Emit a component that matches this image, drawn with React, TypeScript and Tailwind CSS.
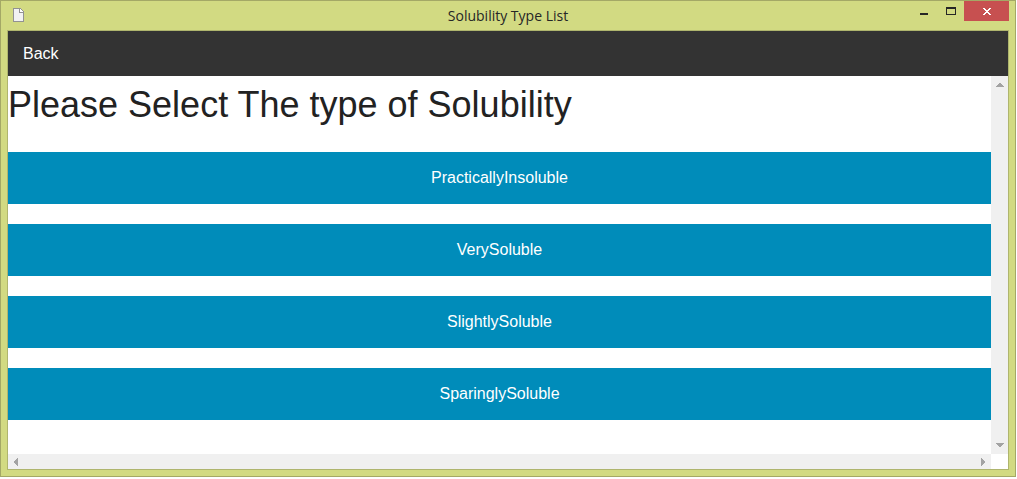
const solubilityTypes = [
  'PracticallyInsoluble',
  'VerySoluble',
  'SlightlySoluble',
  'SparinglySoluble',
];

function TitleBar() {
  return (
    <header className="grid h-[29px] grid-cols-[1fr_auto_1fr] items-start">
      <svg className="mt-[7px] ml-3" width="11" height="14" viewBox="0 0 11 14" shapeRendering="crispEdges" aria-hidden="true">
        <path d="M0 0H8V1H9V2H10V3H11V14H0Z" fill="#929292" />
        <path d="M1 1H6V5H10V13H1Z" fill="#f2f2f2" />
        <path d="M7 1H8V2H9V3H10V4H7Z" fill="#fff" />
      </svg>
      <h2 className="pt-[5px] font-['Open_Sans','Noto_Sans',sans-serif] text-sm leading-5 text-[#262626]">Solubility Type List</h2>
      <div className="mr-1.5 flex justify-end">
        <button type="button" aria-label="Minimize" className="flex h-5 w-[27px] items-center justify-center">
          <svg width="27" height="20" viewBox="0 0 27 20" shapeRendering="crispEdges">
            <path d="M10 12H18V14H10Z" fill="#262626" />
          </svg>
        </button>
        <button type="button" aria-label="Maximize" className="flex h-5 w-[27px] items-center justify-center">
          <svg width="27" height="20" viewBox="0 0 27 20" shapeRendering="crispEdges">
            <path d="M9 6H19V14H9ZM10 8V13H18V8Z" fill="#262626" fillRule="evenodd" />
          </svg>
        </button>
        <button type="button" aria-label="Close" className="flex h-5 w-[45px] items-center justify-center bg-[#c75050]">
          <svg width="45" height="20" viewBox="0 0 45 20" shapeRendering="crispEdges">
            <path d="M19 7h2v1h1v1h2v-1h1v-1h2v1h-1v1h-1v1h-1v1h1v1h1v1h1v1h-2v-1h-1v-1h-2v1h-1v1h-2v-1h1v-1h1v-1h1v-1h-1v-1h-1v-1h-1z" fill="#fff" />
          </svg>
        </button>
      </div>
    </header>
  );
}

function VerticalScroll() {
  return (
    <div className="flex w-[17px] shrink-0 flex-col items-center justify-between bg-[#f0f0f0] py-[7px]" aria-hidden="true">
      <svg width="8" height="4" viewBox="0 0 8 4" shapeRendering="crispEdges">
        <path d="M3 0h2v1h1v1h1v1h1v1H0V3h1V2h1V1h1z" fill="#a3a3a3" />
      </svg>
      <svg width="8" height="4" viewBox="0 0 8 4" shapeRendering="crispEdges">
        <path d="M0 0h8v1H7v1H6v1H5v1H3V3H2V2H1V1H0z" fill="#a3a3a3" />
      </svg>
    </div>
  );
}

function HorizontalScroll() {
  return (
    <div className="mr-[17px] flex h-[15px] items-center justify-between bg-[#f0f0f0] px-1.5" aria-hidden="true">
      <svg width="4" height="8" viewBox="0 0 4 8" shapeRendering="crispEdges">
        <path d="M4 0v8H3V7H2V6H1V5H0V3h1V2h1V1h1V0z" fill="#a3a3a3" />
      </svg>
      <svg width="4" height="8" viewBox="0 0 4 8" shapeRendering="crispEdges">
        <path d="M0 0v8h1V7h1V6h1V5h1V3H3V2H2V1H1V0z" fill="#a3a3a3" />
      </svg>
    </div>
  );
}

export default function App() {
  return (
    <div className="bg-white pr-px pb-0.5 font-['Liberation_Sans',Arial,sans-serif]">
      <div className="border border-[#a4a866] bg-[#d2da82]">
        <TitleBar />
        <div className="mx-1.5 mb-1.5 border border-[#afb56e] bg-white">
          <nav className="flex h-[45px] items-center bg-[#333333] px-[15px]">
            <a href="#back" className="text-base text-white">Back</a>
          </nav>
          <div className="flex">
            <main className="min-w-0 flex-1 pt-[3px] pb-[34px]">
              <h1 className="mb-[21px] text-4xl leading-[52px] text-[#222222]">Please Select The type of Solubility</h1>
              <div className="flex flex-col gap-5">
                {solubilityTypes.map((type) => (
                  <button key={type} type="button" className="h-[52px] w-full bg-[#008cba] text-base text-white">
                    {type}
                  </button>
                ))}
              </div>
            </main>
            <VerticalScroll />
          </div>
          <HorizontalScroll />
        </div>
      </div>
    </div>
  );
}
